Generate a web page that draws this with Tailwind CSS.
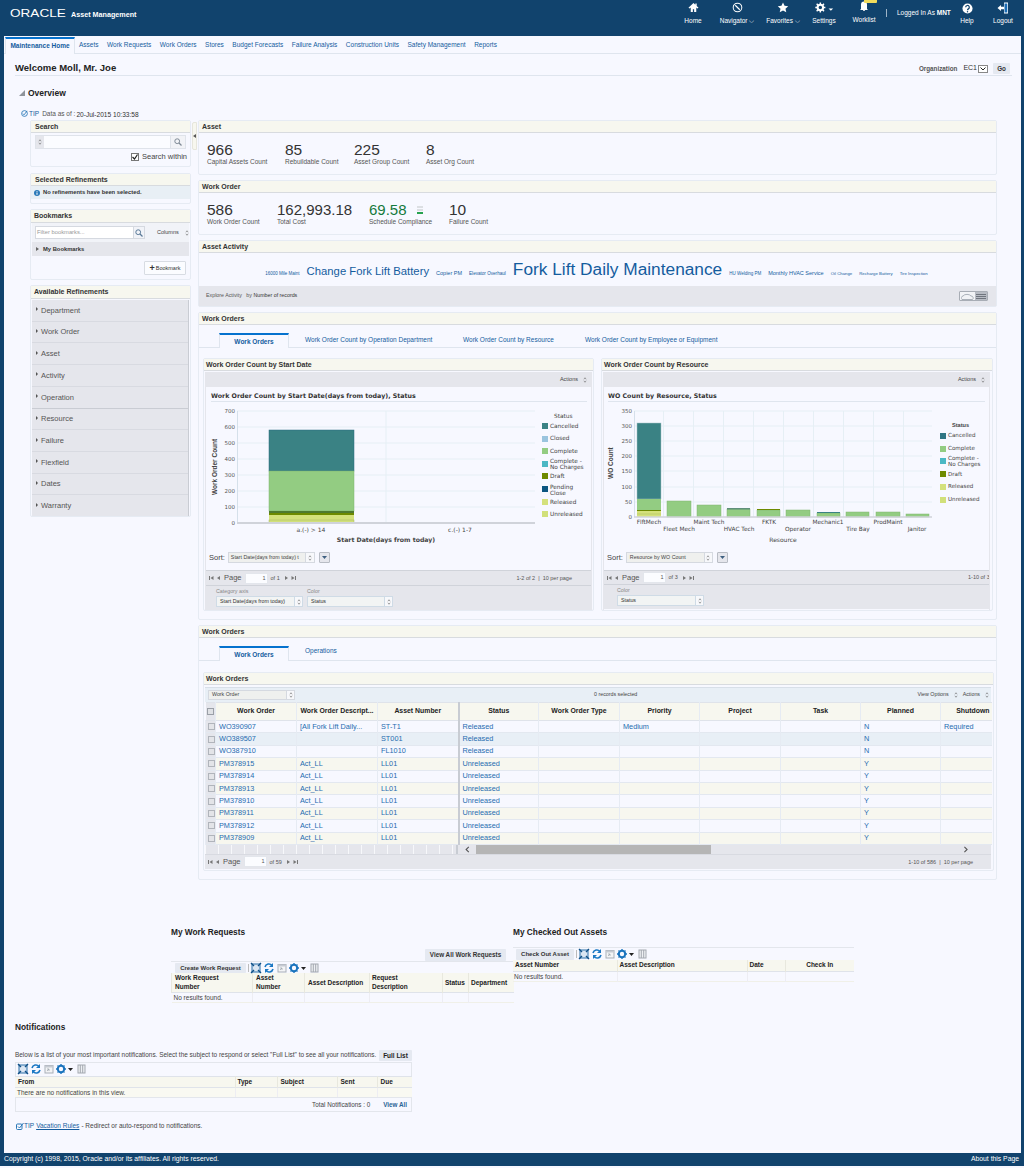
<!DOCTYPE html>
<html lang="en">
<head>
<meta charset="utf-8">
<title>Asset Management</title>
<script src="https://cdn.jsdelivr.net/npm/@tailwindcss/browser@4"></script>
</head>
<body class="m-0 bg-[#11436d] [font-family:'Liberation_Sans',Arial,sans-serif]">
<svg class="hidden" width="0" height="0">
  <symbol id="tools" viewBox="0 0 70 12">
    <rect x="2" y="2" width="8" height="8" fill="#dbe6f2" stroke="#2a6fa8"/><path d="M1 1l3 3M11 1L8 4M1 11l3-3M11 11L8 8" stroke="#0f4f86" stroke-width="1.4"/>
    <path d="M15 5a4 4 0 0 1 7-1.5M23 7a4 4 0 0 1-7 1.5" fill="none" stroke="#1b78c4" stroke-width="1.6"/><path d="M23 1v4h-4zM15 11V7h4z" fill="#1b78c4"/>
    <rect x="28" y="2.5" width="8" height="7.5" fill="#f3f4f6" stroke="#a9afb8"/><rect x="28" y="2.5" width="8" height="2" fill="#c5cad2"/><path d="M30 8l2-2M30 6h2v2" stroke="#9aa1ab" fill="none" stroke-width=".7"/>
    <circle cx="44" cy="6" r="3.2" fill="none" stroke="#1a73bd" stroke-width="2"/><path d="M44 1v2M44 9v2M39 6h2M47 6h2M40.5 2.500l1.400 1.400M46.100 8.100l1.400 1.400M40.500 9.500l1.400-1.400M46.100 3.900l1.400-1.400" stroke="#1a73bd" stroke-width="1.300"/>
    <path d="M51 5h5l-2.500 3z" fill="#222"/>
    <rect x="61" y="2" width="7" height="8" fill="#eef0f3" stroke="#a3a8b0"/><path d="M63.300 2v8M65.700 2v8" stroke="#a3a8b0"/>
  </symbol>
  <symbol id="updown" viewBox="0 0 5 8"><path d="M1 3l1.500-2L4 3M1 5l1.500 2L4 5" fill="none" stroke="#666" stroke-width=".8"/></symbol>
  <symbol id="pgl" viewBox="0 0 12 6"><path d="M.5 1v4" stroke="#777"/><path d="M4.500 1v4L1.500 3zM11 1v4L8 3z" fill="#777"/></symbol>
  <symbol id="pgr" viewBox="0 0 12 6"><path d="M1 1v4l3-2zM7.500 1v4l3-2z" fill="#777"/><path d="M11.500 1v4" stroke="#777"/></symbol>
</svg>

<header class="h-[36px] flex text-white text-[6.5px] relative">
  <div class="flex items-baseline pl-[10px] pt-[6px] h-[20px] w-[672px]">
    <span class="inline-block w-[61px] text-[11.5px] leading-[14px] scale-x-[1.18] origin-left">ORACLE</span>
    <span class="font-bold text-[7.2px]">Asset Management</span>
  </div>
  <div class="w-[42px] flex flex-col items-center pt-[2px]">
    <svg width="11" height="11" viewBox="0 0 12 12"><path d="M6 1L.5 6.200 2 7l1-.9V11h2.300V8h1.400v3H9V6.100l1 .9 1.500-.8L9.500 4.300V1.500H8V2.900z" fill="#fff"/></svg>
    <span class="mt-[4px] leading-[8px]">Home</span>
  </div>
  <div class="w-[46px] flex flex-col items-center pt-[2px]">
    <svg width="11" height="11" viewBox="0 0 12 12"><circle cx="6" cy="6" r="4.700" fill="none" stroke="#fff" stroke-width="1.100"/><path d="M3.500 3.500L8.500 8.500" stroke="#fff" stroke-width="1.300"/></svg>
    <span class="mt-[4px] leading-[8px]">Navigator ⌵</span>
  </div>
  <div class="w-[46px] flex flex-col items-center pt-[2px]">
    <svg width="12" height="11" viewBox="0 0 12 12"><path d="M6 .5l1.700 3.700 4 .4-3 2.700.9 4L6 9.300 2.400 11.300l.9-4-3-2.700 4-.4z" fill="#fff"/></svg>
    <span class="mt-[4px] leading-[8px]">Favorites ⌵</span>
  </div>
  <div class="w-[36px] flex flex-col items-center pt-[2px]">
    <svg width="22" height="11" viewBox="0 0 22 12"><circle cx="7" cy="6" r="3" fill="none" stroke="#fff" stroke-width="2.200"/><path d="M7 .5v2M7 9.500v2M1.500 6h2M10.500 6h2M3 2l1.500 1.500M9.500 8.500L11 10M3 10l1.500-1.500M9.500 3.500L11 2" stroke="#fff" stroke-width="1.600"/><path d="M16 7h5l-2.500 2.500z" fill="#fff"/></svg>
    <span class="mt-[4px] leading-[8px]">Settings</span>
  </div>
  <div class="w-[44px] flex flex-col items-center pt-[2px] relative">
    <svg width="10" height="10" viewBox="0 0 10 10" class="-mt-[1px] mb-[1px]"><path d="M2 8V3.500a3 3 0 0 1 6 0V8l1 1H1zM4 9.200h2V10H4z" fill="#fff"/></svg>
    <span class="mt-[4px] leading-[8px]">Worklist</span>
    <span class="absolute left-[22px] top-0 w-[13px] h-[3px] bg-[#f2dc5c] rounded-b-[1px]"></span>
  </div>
  <div class="w-[65px] flex items-start">
    <span class="w-px h-[8px] bg-[#9fb5c8] mt-[9px]"></span>
    <span class="ml-[10px] mt-[9px] leading-[8px] whitespace-nowrap">Logged In As <b>MNT</b></span>
  </div>
  <div class="w-[32px] flex flex-col items-center pt-[3px]">
    <svg width="11" height="11" viewBox="0 0 12 12"><circle cx="6" cy="6" r="5.500" fill="#fff"/><path d="M4 4.700a2 2 0 1 1 3 1.700c-.7.400-1 .7-1 1.500" fill="none" stroke="#11436d" stroke-width="1.300"/><circle cx="6" cy="9.500" r=".8" fill="#11436d"/></svg>
    <span class="mt-[3px] leading-[8px]">Help</span>
  </div>
  <div class="w-[40px] flex flex-col items-center pt-[2px]">
    <svg width="12" height="12" viewBox="0 0 12 12"><path d="M7 .5h4v11H7z" fill="#fff"/><path d="M7.500 1.500h2.800v9H7.500z" fill="#1a6cb5"/><path d="M.5 6L4 3v1.800h3v2.400H4V9z" fill="#fff"/></svg>
    <span class="mt-[3px] leading-[8px]">Logout</span>
  </div>
</header>

<div class="ml-[4px] mr-[3px] h-[1117px] bg-[#f7f8ff] text-[#333] overflow-hidden">
  <nav class="h-[18px] border-b border-[#dfe5ee] flex items-start pl-[1px] text-[6.500px] text-[#145c9e]">
    <span class="w-[70px] h-[17px] border-t-2 border-t-[#0572ce] border-x border-x-[#dfe5ee] bg-[#f7f8ff] text-center font-bold leading-[14px] mt-[1px] -mb-px">Maintenance Home</span>
    <div class="flex gap-[8.500px] pl-[4px] pt-[5px] leading-[8px] whitespace-nowrap">
      <span>Assets</span><span>Work Requests</span><span>Work Orders</span><span>Stores</span><span>Budget Forecasts</span><span>Failure Analysis</span><span>Construction Units</span><span>Safety Management</span><span>Reports</span>
    </div>
  </nav>

  <div class="ml-[11px] mr-[9px] h-[22px] border-b border-[#dfe5ee] flex items-center justify-between pt-[8px]">
    <h1 class="text-[9.500px] font-bold text-[#222]">Welcome Moll, Mr. Joe</h1>
    <div class="flex items-center text-[6.300px] mr-[2px]">
      <span class="font-bold text-[#555]">Organization</span>
      <span class="ml-[6px] text-[7px]">EC1</span>
      <span class="ml-px w-[10px] h-[8px] border border-[#888] bg-white flex items-center justify-center"><svg width="6" height="4" viewBox="0 0 6 4"><path d="M.5.500L3 3 5.500.500" fill="none" stroke="#222" stroke-width="1"/></svg></span>
      <span class="ml-[5px] w-[17px] h-[11px] rounded-[1px] bg-[#e5e9f1] font-bold text-center leading-[11px]">Go</span>
    </div>
  </div>

  <div class="flex items-center ml-[15px] mt-[10px] h-[14px]">
    <svg width="6" height="6" viewBox="0 0 6 6"><path d="M6 0v6H0z" fill="#8f949b"/></svg>
    <h2 class="ml-[3px] text-[8.500px] font-bold text-[#222]">Overview</h2>
  </div>

  <div class="flex items-center ml-[17px] mt-[9px] h-[9px] text-[6.500px] leading-[9px]">
    <svg width="7" height="7" viewBox="0 0 8 8"><circle cx="4" cy="4" r="3.300" fill="none" stroke="#2a79b8"/><path d="M2 4l1.500 1.500L7 1" fill="none" stroke="#2a79b8"/></svg>
    <span class="ml-px text-[#145c9e]">TIP</span>
    <span class="ml-[3px] text-[#555]">Data as of :</span>
    <span class="ml-[1px] mt-[1px] text-[#333] text-[6.600px]">20-Jul-2015 10:33:58</span>
  </div>

  <main class="flex ml-[26px] mt-[2px] relative">
    <aside class="w-[161px] flex flex-col">
      <section class="h-[47px] border border-[#e6ebf3] rounded-[2px]">
        <div class="h-[12px] bg-[#f7f7ef] border-b border-[#d8dbdf] pl-[4px] text-[7px] font-bold leading-[11px]">Search</div>
        <div class="flex mx-[4px] mt-[2px] h-[14px] border border-[#dfe3ea]">
          <span class="w-[8px] bg-[#e5e6ec] flex items-center justify-center"><svg width="4" height="6"><use href="#updown"/></svg></span>
          <span class="flex-1 bg-[#fbfcff] border-r border-[#dfe3ea]"></span>
          <span class="w-[14px] bg-[#f2f3f7] flex items-center justify-center"><svg width="8" height="8" viewBox="0 0 8 8"><circle cx="3.200" cy="3.200" r="2.400" fill="none" stroke="#7f8a96"/><path d="M5 5l2.500 2.500" stroke="#7f8a96" stroke-width="1.200"/></svg></span>
        </div>
        <div class="flex justify-end items-center pr-[3px] mt-[3px] text-[7.500px] text-[#444] leading-[10px]">
          <span class="w-[8px] h-[8px] border border-[#777] bg-white mr-[3px] flex items-center justify-center"><svg width="6" height="6" viewBox="0 0 6 6"><path d="M.5 3l2 2L5.500 .5" fill="none" stroke="#222" stroke-width="1.200"/></svg></span>Search within
        </div>
      </section>
      <section class="mt-[6px] h-[31px] border border-[#e6ebf3] rounded-[2px]">
        <div class="h-[12px] bg-[#f7f7ef] border-b border-[#d8dbdf] pl-[4px] text-[7px] font-bold leading-[11px]">Selected Refinements</div>
        <div class="h-[13px] bg-[#e8eff5] flex items-center pl-[3px] text-[5.800px] font-bold text-[#333]">
          <svg width="6" height="6" viewBox="0 0 6 6"><circle cx="3" cy="3" r="3" fill="#2a79b8"/><path d="M3 2.500v2.300M3 1v.8" stroke="#fff"/></svg>
          <span class="ml-[3px]">No refinements have been selected.</span>
        </div>
      </section>
      <section class="mt-[5px] h-[71px] border border-[#e6ebf3] rounded-[2px]">
        <div class="h-[13px] bg-[#f7f7ef] border-b border-[#d8dbdf] pl-[3px] text-[7px] font-bold leading-[12px]">Bookmarks</div>
        <div class="ml-[1px] mr-[1px] h-[19px] flex items-center bg-[#f1f3f8] pl-[3px]">
          <span class="w-[99px] h-[13px] border border-[#d5d9e0] bg-white text-[5.800px] text-[#999] leading-[11px] pl-[1px]">Filter bookmarks...</span>
          <span class="w-[11px] h-[13px] border border-l-0 border-[#d5d9e0] flex items-center justify-center"><svg width="8" height="8" viewBox="0 0 8 8"><circle cx="3.200" cy="3.200" r="2.400" fill="none" stroke="#5a7a98"/><path d="M5 5l2.500 2.500" stroke="#5a7a98" stroke-width="1.200"/></svg></span>
          <span class="ml-[12px] text-[5.500px] text-[#444]">Columns</span>
          <svg width="4" height="6" class="ml-[6px]"><use href="#updown"/></svg>
        </div>
        <div class="mx-[1px] h-[14px] bg-[#e5e6ec] flex items-center pl-[4px] text-[5.800px] font-bold text-[#333]">
          <svg width="3" height="4" viewBox="0 0 3 4"><path d="M0 0l3 2-3 2z" fill="#666"/></svg>
          <span class="ml-[4px]">My Bookmarks</span>
        </div>
        <div class="flex justify-end mr-[4px] mt-[5px]">
          <span class="h-[14px] w-[42px] border border-[#d8dce3] rounded-[1px] bg-[#fbfcff] text-[5.500px] flex items-center justify-center"><b class="text-[9px] leading-[9px] mr-[1px]">+</b>Bookmark</span>
        </div>
      </section>
      <section class="mt-[5px] h-[232px] border border-[#e6ebf3] rounded-[2px]">
        <div class="h-[13px] bg-[#f7f7ef] border-b border-[#d8dbdf] pl-[3px] text-[7px] font-bold leading-[12px]">Available Refinements</div>
        <ul class="mx-[1px] mt-px h-[216px] bg-[#e5e6ec] border-r border-[#c9ccd3] flex flex-col text-[7.500px] text-[#555]">
          <li class="flex-1 flex items-center pl-[4px] border-b border-[#d8dae1]"><svg width="2" height="4" viewBox="0 0 2 4" class="-mt-[2px]"><path d="M0 0l2 2-2 2z" fill="#555"/></svg><span class="ml-[3px]">Department</span></li>
          <li class="flex-1 flex items-center pl-[4px] border-b border-[#d8dae1]"><svg width="2" height="4" viewBox="0 0 2 4" class="-mt-[2px]"><path d="M0 0l2 2-2 2z" fill="#555"/></svg><span class="ml-[3px]">Work Order</span></li>
          <li class="flex-1 flex items-center pl-[4px] border-b border-[#d8dae1]"><svg width="2" height="4" viewBox="0 0 2 4" class="-mt-[2px]"><path d="M0 0l2 2-2 2z" fill="#555"/></svg><span class="ml-[3px]">Asset</span></li>
          <li class="flex-1 flex items-center pl-[4px] border-b border-[#d8dae1]"><svg width="2" height="4" viewBox="0 0 2 4" class="-mt-[2px]"><path d="M0 0l2 2-2 2z" fill="#555"/></svg><span class="ml-[3px]">Activity</span></li>
          <li class="flex-1 flex items-center pl-[4px] border-b border-[#c9ccd3]"><svg width="2" height="4" viewBox="0 0 2 4" class="-mt-[2px]"><path d="M0 0l2 2-2 2z" fill="#555"/></svg><span class="ml-[3px]">Operation</span></li>
          <li class="flex-1 flex items-center pl-[4px] border-b border-[#d8dae1]"><svg width="2" height="4" viewBox="0 0 2 4" class="-mt-[2px]"><path d="M0 0l2 2-2 2z" fill="#555"/></svg><span class="ml-[3px]">Resource</span></li>
          <li class="flex-1 flex items-center pl-[4px] border-b border-[#d8dae1]"><svg width="2" height="4" viewBox="0 0 2 4" class="-mt-[2px]"><path d="M0 0l2 2-2 2z" fill="#555"/></svg><span class="ml-[3px]">Failure</span></li>
          <li class="flex-1 flex items-center pl-[4px] border-b border-[#d8dae1]"><svg width="2" height="4" viewBox="0 0 2 4" class="-mt-[2px]"><path d="M0 0l2 2-2 2z" fill="#555"/></svg><span class="ml-[3px]">Flexfield</span></li>
          <li class="flex-1 flex items-center pl-[4px] border-b border-[#d8dae1]"><svg width="2" height="4" viewBox="0 0 2 4" class="-mt-[2px]"><path d="M0 0l2 2-2 2z" fill="#555"/></svg><span class="ml-[3px]">Dates</span></li>
          <li class="flex-1 flex items-center pl-[4px]"><svg width="2" height="4" viewBox="0 0 2 4" class="-mt-[2px]"><path d="M0 0l2 2-2 2z" fill="#555"/></svg><span class="ml-[3px]">Warranty</span></li>
        </ul>
      </section>
    </aside>

    <span class="absolute left-[162px] top-[2px] w-[5px] h-[28px] bg-[#f7f7ef] border border-[#e6e6dc] rounded-l-[2px] flex items-center"><svg width="3" height="4" viewBox="0 0 3 4"><path d="M3 0v4L0 2z" fill="#555"/></svg></span>

    <div class="ml-[7px] w-[799px] flex flex-col">
      <section class="h-[55px] border border-[#e6ebf3] rounded-[2px]">
        <div class="h-[12px] bg-[#f7f7ef] border-b border-[#d8dbdf] pl-[3px] text-[7px] font-bold leading-[11px]">Asset</div>
        <div class="flex pl-[8px] pt-[9px]">
          <div class="w-[78px]"><div class="text-[15.500px] leading-[16px] text-[#333]">966</div><div class="text-[6.500px] leading-[8px] text-[#555]">Capital Assets Count</div></div>
          <div class="w-[69px]"><div class="text-[15.500px] leading-[16px] text-[#333]">85</div><div class="text-[6.500px] leading-[8px] text-[#555]">Rebuildable Count</div></div>
          <div class="w-[72px]"><div class="text-[15.500px] leading-[16px] text-[#333]">225</div><div class="text-[6.500px] leading-[8px] text-[#555]">Asset Group Count</div></div>
          <div><div class="text-[15.500px] leading-[16px] text-[#333]">8</div><div class="text-[6.500px] leading-[8px] text-[#555]">Asset Org Count</div></div>
        </div>
      </section>
      <section class="mt-[5px] h-[55px] border border-[#e6ebf3] rounded-[2px]">
        <div class="h-[12px] bg-[#f7f7ef] border-b border-[#d8dbdf] pl-[3px] text-[7px] font-bold leading-[11px]">Work Order</div>
        <div class="flex pl-[8px] pt-[9px]">
          <div class="w-[70px]"><div class="text-[15.500px] leading-[16px] text-[#333]">586</div><div class="text-[6.500px] leading-[8px] text-[#555]">Work Order Count</div></div>
          <div class="w-[92px]"><div class="text-[15px] leading-[16px] text-[#333]">162,993.18</div><div class="text-[6.500px] leading-[8px] text-[#555]">Total Cost</div></div>
          <div class="w-[80px]">
            <div class="flex items-center text-[15px] leading-[16px] text-[#157a3d]">69.58<span class="ml-[10px] w-[6px] h-[8px] flex flex-col"><span class="h-[2px] bg-[#dcdfe3]"></span><span class="h-[1px]"></span><span class="h-[2px] bg-[#dcdfe3]"></span><span class="h-[1px]"></span><span class="h-[2px] bg-[#27a24f]"></span></span></div>
            <div class="text-[6.500px] leading-[8px] text-[#555] whitespace-nowrap">Schedule Compliance</div>
          </div>
          <div><div class="text-[15.500px] leading-[16px] text-[#333]">10</div><div class="text-[6.500px] leading-[8px] text-[#555]">Failure Count</div></div>
        </div>
      </section>
      <section class="mt-[5px] h-[67px] border border-[#e6ebf3] rounded-[2px] flex flex-col">
        <div class="h-[12px] bg-[#f7f7ef] border-b border-[#d8dbdf] pl-[3px] text-[7px] font-bold leading-[11px]">Asset Activity</div>
        <div class="flex-1 flex items-baseline justify-center gap-[7px] pt-[5px] pr-[2px] text-[#145c9e] whitespace-nowrap">
          <span class="text-[4.500px]">16000 Mile Maint</span>
          <span class="text-[11.300px]">Change Fork Lift Battery</span>
          <span class="text-[5.500px]">Copier PM</span>
          <span class="text-[4.600px]">Elevator Overhaul</span>
          <span class="text-[17.300px] leading-[22px]">Fork Lift Daily Maintenance</span>
          <span class="text-[4.500px]">HU Welding PM</span>
          <span class="text-[5.500px]">Monthly HVAC Service</span>
          <span class="text-[4.300px]">Oil Change</span>
          <span class="text-[4.300px]">Recharge Battery</span>
          <span class="text-[4.300px]">Tire Inspection</span>
        </div>
        <div class="h-[20px] bg-[#e5e6ec] flex items-center justify-between pl-[7px] pr-[8px] text-[5.300px] text-[#555]">
          <span>Explore Activity &nbsp; by <span class="text-[#333]">Number of records</span></span>
          <span class="w-[29px] h-[10px] border border-[#a8adb5] rounded-[1px] flex overflow-hidden bg-[#f2f3f6]">
            <span class="w-[15px] flex items-center justify-center"><svg width="13" height="7" viewBox="0 0 13 7"><path d="M1 6.500a2 2 0 0 1 1-3.500 4.500 3 0 0 1 8 0 2 2 0 0 1 1.500 3.500z" fill="none" stroke="#98a0aa" stroke-width=".8"/></svg></span>
            <span class="flex-1 bg-[#b8bcc4] flex flex-col justify-center gap-[1px] px-[1px]"><span class="h-px bg-[#70757e]"></span><span class="h-px bg-[#70757e]"></span><span class="h-px bg-[#70757e]"></span></span>
          </span>
        </div>
      </section>

      <section class="mt-[5px] h-[308px] border border-[#e6ebf3] rounded-[2px]">
        <div class="h-[12px] bg-[#f7f7ef] border-b border-[#d8dbdf] pl-[3px] text-[7px] font-bold leading-[11px]">Work Orders</div>
        <div class="h-[23px] border-b border-[#dfe5ee] flex items-end pl-[20px] text-[6.500px] text-[#145c9e] whitespace-nowrap">
          <span class="w-[70px] h-[15px] border-t-2 border-t-[#0572ce] border-x border-x-[#dfe5ee] -mb-px bg-[#f7f8ff] text-center font-bold leading-[14px]">Work Orders</span>
          <div class="flex items-center h-[15px] ml-[16px]"><span class="w-[158px]">Work Order Count by Operation Department</span><span class="w-[122px]">Work Order Count by Resource</span><span>Work Order Count by Employee or Equipment</span></div>
        </div>
        <div class="flex gap-[7px] px-[4px] mt-[10px]">
          <div class="w-[391px] h-[253px] border border-[#e6ebf3] rounded-[2px] flex flex-col">
            <div class="h-[12px] bg-[#f7f7ef] border-b border-[#d8dbdf] pl-[2px] text-[7px] font-bold leading-[11px]">Work Order Count by Start Date</div>
            <div class="mx-[1px] mt-px border-x border-[#e5e6ec] flex-1 flex flex-col">
              <div class="h-[15px] bg-[#e5e6ec] flex items-center justify-end pr-[4px] text-[5.500px] text-[#444]">Actions<svg width="4" height="6" class="ml-[5px]"><use href="#updown"/></svg></div>
              <svg width="387" height="162" viewBox="205 387 387 162" class="block" font-family="'DejaVu Sans',sans-serif">
                <text x="210" y="398" font-size="6.300" font-weight="700" fill="#333">Work Order Count by Start Date(days from today), Status</text>
                <path d="M210 401.500H586" stroke="#dfe5ee"/>
                <g stroke="#e6eff5"><path d="M236 411H534M236 427H534M236 443H534M236 459H534M236 475H534M236 491H534M236 507H534M385 411V523"/></g>
                <path d="M236.500 411V523" stroke="#d5e0ea"/>
                <g font-size="5.500" fill="#555" text-anchor="end"><text x="234" y="413">700</text><text x="234" y="429">600</text><text x="234" y="445">500</text><text x="234" y="461">400</text><text x="234" y="477">300</text><text x="234" y="493">200</text><text x="234" y="509">100</text><text x="234" y="525">0</text></g>
                <text transform="translate(216 495) rotate(-90)" font-size="6.500" font-weight="700" fill="#444" font-family="'Liberation Sans',sans-serif">Work Order Count</text>
                <rect x="268" y="430" width="85" height="41" fill="#3a8284" stroke="#2b6a80" stroke-width=".5"/>
                <rect x="268" y="471" width="85" height="40" fill="#93cc82" stroke="#7fb56f" stroke-width=".5"/>
                <rect x="268" y="511" width="85" height="2" fill="#4f7a30"/>
                <rect x="268" y="513" width="85" height="2" fill="#6d8a00"/>
                <rect x="268" y="515" width="85" height="5" fill="#d4e17c"/>
                <rect x="268" y="520" width="85" height="3" fill="#d1e07a" stroke="#a9b85f" stroke-width=".5"/>
                <path d="M236 523H534" stroke="#d0d3da" stroke-width="2"/>
                <g font-size="6" fill="#444" text-anchor="middle"><text x="310" y="532">a.(-) &gt; 14</text><text x="459" y="532">c.(-) 1-7</text></g>
                <text x="385" y="542" font-size="6.200" font-weight="700" fill="#444" text-anchor="middle">Start Date(days from today)</text>
                <g font-size="5.800" fill="#444"><text x="553" y="418">Status</text>
                  <rect x="541" y="423" width="6" height="6" fill="#3a8284"/><text x="549" y="428">Cancelled</text>
                  <rect x="541" y="436" width="6" height="6" fill="#9ac4de"/><text x="549" y="440">Closed</text>
                  <rect x="541" y="448" width="6" height="6" fill="#93cc82"/><text x="549" y="453">Complete</text>
                  <rect x="541" y="461" width="6" height="6" fill="#4bb8c4"/><text x="549" y="463">Complete -</text><text x="549" y="469">No Charges</text>
                  <rect x="541" y="473" width="6" height="6" fill="#6d8a00"/><text x="549" y="478">Draft</text>
                  <rect x="541" y="486" width="6" height="6" fill="#0b5680"/><text x="549" y="489">Pending</text><text x="549" y="495">Close</text>
                  <rect x="541" y="499" width="6" height="6" fill="#d4e17c"/><text x="549" y="504">Released</text>
                  <rect x="541" y="511" width="6" height="6" fill="#d1e07a"/><text x="549" y="516">Unreleased</text>
                </g>
              </svg>
              <div class="h-[21px] pb-[4px] flex items-center pl-[3px] text-[7.500px] text-[#444]">Sort:
                <span class="ml-[3px] w-[87px] h-[11px] border border-[#d5d9e0] bg-[#eff0ee] flex items-center justify-between text-[5.300px] pl-[2px] whitespace-nowrap overflow-hidden">Start Date(days from today) t<span class="w-[9px] h-full border-l border-[#d5d9e0] bg-[#f7f8fb] flex items-center justify-center shrink-0"><svg width="4" height="6"><use href="#updown"/></svg></span></span>
                <span class="ml-[4px] w-[11px] h-[11px] border border-[#b8bcc4] bg-[#e5e6ec] rounded-[1px] flex items-center justify-center"><svg width="5" height="3" viewBox="0 0 5 3"><path d="M0 0h5L2.500 3z" fill="#3e5f80"/></svg></span>
              </div>
              <div class="h-[15px] bg-[#e5e6ec] border-t border-[#d0d3da] flex items-center px-[3px] text-[#555] text-[5.500px]">
                <svg width="12" height="6"><use href="#pgl"/></svg><span class="ml-[3px] text-[7.500px]">Page</span>
                <span class="ml-[3px] w-[23px] h-[11px] bg-[#fbfcff] border border-[#e3e6ec] text-right pr-[1px] leading-[9px]">1</span>
                <span class="ml-[3px]">of 1</span><svg width="12" height="6" class="ml-[4px]"><use href="#pgr"/></svg>
                <span class="ml-auto mr-[16px]">1-2 of 2 &nbsp;|&nbsp; 10 per page</span>
              </div>
              <div class="h-[25px] bg-[#e5e6ec] border-t border-[#d0d3da] flex gap-[4px] pl-[10px] text-[5.300px]">
                <div class="mt-[2px]"><div class="text-[#888] leading-[6px]">Category axis</div><div class="w-[87px] h-[11px] mt-[2px] border border-[#cfdbe6] bg-[#f2f4f4] flex items-center justify-between pl-[3px] text-[#333]">Start Date(days from today)<span class="w-[8px] h-full border-l border-[#cfdbe6] bg-[#f7f8fb] flex items-center justify-center"><svg width="4" height="6"><use href="#updown"/></svg></span></div></div>
                <div class="mt-[2px]"><div class="text-[#888] leading-[6px]">Color</div><div class="w-[86px] h-[11px] mt-[2px] border border-[#cfdbe6] bg-[#f2f4f4] flex items-center justify-between pl-[3px] text-[#333]">Status<span class="w-[8px] h-full border-l border-[#cfdbe6] bg-[#f7f8fb] flex items-center justify-center"><svg width="4" height="6"><use href="#updown"/></svg></span></div></div>
              </div>
            </div>
          </div>

          <div class="w-[392px] h-[253px] border border-[#e6ebf3] rounded-[2px] flex flex-col">
            <div class="h-[12px] bg-[#f7f7ef] border-b border-[#d8dbdf] pl-[2px] text-[7px] font-bold leading-[11px]">Work Order Count by Resource</div>
            <div class="ml-px mr-[2px] mt-px border-x border-[#e5e6ec] flex-1 flex flex-col overflow-hidden">
              <div class="h-[15px] bg-[#e5e6ec] flex items-center justify-end pr-[4px] text-[5.500px] text-[#444]">Actions<svg width="4" height="6" class="ml-[5px]"><use href="#updown"/></svg></div>
              <svg width="387" height="162" viewBox="603 387 387 162" class="block" font-family="'DejaVu Sans',sans-serif">
                <text x="607" y="398" font-size="6.300" font-weight="700" fill="#333">WO Count by Resource, Status</text>
                <path d="M607 401.500H984" stroke="#dfe5ee"/>
                <g stroke="#e6eff5"><path d="M633 411H931M633 426H931M633 441H931M633 456H931M633 471H931M633 487H931M633 502H931"/><path d="M662.500 411V517M692.500 411V517M722.500 411V517M752.500 411V517M782.500 411V517M812.500 411V517M842.500 411V517M872.500 411V517M902.500 411V517"/></g>
                <path d="M633.500 411V517" stroke="#d5e0ea"/>
                <g font-size="5.500" fill="#555" text-anchor="end"><text x="631" y="413">350</text><text x="631" y="428">300</text><text x="631" y="443">250</text><text x="631" y="458">200</text><text x="631" y="473">150</text><text x="631" y="489">100</text><text x="631" y="504">50</text><text x="631" y="519">0</text></g>
                <text transform="translate(612 479) rotate(-90)" font-size="6.500" fill="#444" font-family="'Liberation Sans',sans-serif" font-weight="700">WO Count</text>
                <rect x="636" y="423" width="24" height="76" fill="#3a8284" stroke="#a8c2c6" stroke-width=".5"/>
                <rect x="636" y="499" width="24" height="11" fill="#93cc82"/>
                <rect x="636" y="510" width="24" height="1" fill="#6d8a00"/>
                <rect x="636" y="511" width="24" height="6" fill="#d4e17c"/><path d="M636 514H660" stroke="#a9b85f" stroke-width=".5"/>
                <g fill="#93cc82" stroke="#7fb56f" stroke-width=".5">
                  <rect x="666" y="501" width="24" height="16"/><rect x="696" y="505" width="24" height="12"/><rect x="726" y="509" width="23" height="8"/><rect x="756" y="510" width="23" height="7"/><rect x="785" y="510" width="24" height="7"/><rect x="816" y="513" width="23" height="4"/><rect x="845" y="512" width="23" height="5"/><rect x="875" y="512" width="24" height="5"/><rect x="905" y="514" width="23" height="3"/>
                </g>
                <rect x="726" y="508" width="23" height="1.500" fill="#5f8f7a"/><rect x="756" y="509" width="23" height="1" fill="#6d8a00"/><rect x="816" y="512" width="23" height="1" fill="#3a8284"/>
                <path d="M633 517H931" stroke="#d0d3da" stroke-width="1.500"/>
                <g font-size="5.800" fill="#444" text-anchor="middle"><text x="648" y="524">FlftMech</text><text x="678" y="531">Fleet Mech</text><text x="708" y="524">Maint Tech</text><text x="738" y="531">HVAC Tech</text><text x="768" y="524">FKTK</text><text x="797" y="531">Operator</text><text x="827" y="524">Mechanic1</text><text x="857" y="531">Tire Bay</text><text x="887" y="524">ProdMaint</text><text x="916" y="531">Janitor</text></g>
                <text x="782" y="542" font-size="6" fill="#444" text-anchor="middle">Resource</text>
                <g font-size="5.600" fill="#444"><text x="951" y="427" font-weight="700" font-family="'Liberation Sans',sans-serif">Status</text>
                  <rect x="939" y="433" width="6" height="6" fill="#2f7583"/><text x="947" y="437">Cancelled</text>
                  <rect x="939" y="446" width="6" height="6" fill="#93cc82"/><text x="947" y="450">Complete</text>
                  <rect x="939" y="458" width="6" height="6" fill="#4bb8c4"/><text x="947" y="460">Complete -</text><text x="947" y="466">No Charges</text>
                  <rect x="939" y="471" width="6" height="6" fill="#6d8a00"/><text x="947" y="476">Draft</text>
                  <rect x="939" y="484" width="6" height="6" fill="#d4e17c"/><text x="947" y="488">Released</text>
                  <rect x="939" y="497" width="6" height="6" fill="#d1e07a"/><text x="947" y="501">Unreleased</text>
                </g>
              </svg>
              <div class="h-[21px] pb-[4px] flex items-center pl-[3px] text-[7.500px] text-[#444]">Sort:
                <span class="ml-[3px] w-[87px] h-[11px] border border-[#d5d9e0] bg-[#eff0ee] flex items-center justify-between text-[5.300px] pl-[3px] whitespace-nowrap overflow-hidden">Resource by WO Count<span class="w-[8px] h-full border-l border-[#d5d9e0] bg-[#f7f8fb] flex items-center justify-center shrink-0"><svg width="4" height="6"><use href="#updown"/></svg></span></span>
                <span class="ml-[4px] w-[11px] h-[11px] border border-[#b8bcc4] bg-[#e5e6ec] rounded-[1px] flex items-center justify-center"><svg width="5" height="3" viewBox="0 0 5 3"><path d="M0 0h5L2.500 3z" fill="#3e5f80"/></svg></span>
              </div>
              <div class="h-[14px] bg-[#e5e6ec] border-t border-[#d0d3da] flex items-center px-[3px] text-[#555] text-[5.500px]">
                <svg width="12" height="6"><use href="#pgl"/></svg><span class="ml-[3px] text-[7.500px]">Page</span>
                <span class="ml-[3px] w-[23px] h-[11px] bg-[#fbfcff] border border-[#e3e6ec] text-right pr-[1px] leading-[9px]">1</span>
                <span class="ml-[3px]">of 3</span><svg width="12" height="6" class="ml-[4px]"><use href="#pgr"/></svg>
                <span class="ml-auto -mr-[4px] whitespace-nowrap w-[22px] overflow-hidden">1-10 of 30</span>
              </div>
              <div class="h-[25px] bg-[#e5e6ec] border-t border-[#d0d3da] pl-[13px] text-[5.300px]">
                <div class="mt-[2px]"><div class="text-[#888] leading-[6px]">Color</div><div class="w-[87px] h-[11px] mt-[2px] border border-[#cfdbe6] bg-[#f2f4f4] flex items-center justify-between pl-[3px] text-[#333]">Status<span class="w-[8px] h-full border-l border-[#cfdbe6] bg-[#f7f8fb] flex items-center justify-center"><svg width="4" height="6"><use href="#updown"/></svg></span></div></div>
              </div>
            </div>
          </div>
        </div>
      </section>

      <section class="mt-[5px] h-[255px] border border-[#e6ebf3] rounded-[2px]">
        <div class="h-[12px] bg-[#f7f7ef] border-b border-[#d8dbdf] pl-[3px] text-[7px] font-bold leading-[11px]">Work Orders</div>
        <div class="h-[23px] border-b border-[#dfe5ee] flex items-end pl-[20px] text-[6.500px] text-[#145c9e]">
          <span class="w-[70px] h-[15px] border-t-2 border-t-[#0572ce] border-x border-x-[#dfe5ee] -mb-px bg-[#f7f8ff] text-center font-bold leading-[14px]">Work Orders</span>
          <span class="ml-[16px] h-[15px] leading-[12px]">Operations</span>
        </div>
        <div class="mx-[4px] mt-[11px] h-[199px] border border-[#e6ebf3] rounded-[2px] w-[791px]">
          <div class="h-[12px] bg-[#f7f7ef] border-b border-[#d8dbdf] pl-[2px] text-[7px] font-bold leading-[11px]">Work Orders</div>
          <div class="ml-px w-[786px] mt-[2px]">
            <div class="h-[15px] bg-[#e8eff6] border-t border-[#d8dfe8] flex items-center pl-[3px] pr-[2px] text-[5.300px] text-[#444]">
              <span class="w-[87px] h-[10px] bg-[#eff0ee] border border-[#d5d9e0] flex items-center justify-between pl-[3px]">Work Order<span class="w-[8px] h-full border-l border-[#d5d9e0] bg-[#f7f8fb] flex items-center justify-center"><svg width="4" height="6"><use href="#updown"/></svg></span></span>
              <span class="ml-[299px]">0 records selected</span>
              <span class="ml-auto">View Options</span><svg width="4" height="6" class="ml-[5px]"><use href="#updown"/></svg>
              <span class="ml-[5px]">Actions</span><svg width="4" height="6" class="ml-[5px]"><use href="#updown"/></svg>
            </div>
            <table class="table-fixed border-collapse w-[786px] text-[7.300px] text-[#1f6cb0]">
              <colgroup><col class="w-[10px]"><col class="w-[81px]"><col class="w-[81px]"><col class="w-[81px]"><col class="w-[80px]"><col class="w-[81px]"><col class="w-[80px]"><col class="w-[81px]"><col class="w-[80px]"><col class="w-[80px]"><col class="w-[51px]"></colgroup>
              <thead class="text-[#222] text-[6.900px] font-bold bg-[#f7f7ef]">
                <tr class="h-[18px] border-y border-[#dfe3ea]">
                  <th class="bg-[#e5e6ec] p-0"><span class="block mx-auto w-[7px] h-[7px] border border-[#9a9fa7] bg-[#dfe1e5]"></span></th>
                  <th class="border-l border-[#e6ebf3]">Work Order</th><th class="border-l border-[#e6ebf3]">Work Order Descript...</th><th class="border-l border-[#e6ebf3]">Asset Number</th><th class="border-l-2 border-[#c8ccd3]">Status</th><th class="border-l border-[#e6ebf3]">Work Order Type</th><th class="border-l border-[#e6ebf3]">Priority</th><th class="border-l border-[#e6ebf3]">Project</th><th class="border-l border-[#e6ebf3]">Task</th><th class="border-l border-[#e6ebf3]">Planned</th><th class="border-l border-[#e6ebf3] text-right pr-[2px] whitespace-nowrap overflow-hidden">Shutdown</th>
                </tr>
              </thead>
              <tbody class="[&_td]:p-0 [&_td]:pl-[3px] [&_td]:leading-[10px] [&_td]:border-l [&_td]:border-[#e6ebf3] [&_tr]:border-b [&_tr]:border-[#e3e8f0] [&_tr]:h-[12.400px]">
                <tr class="bg-[#f7f8ff]"><td class="bg-[#e5e6ec] !pl-[1.500px]"><span class="block w-[7px] h-[7px] border border-[#b0b4bb] bg-[#e3e4e8]"></span></td><td>WO390907</td><td>[All Fork Lift Daily...</td><td>ST-T1</td><td class="!border-l-2 !border-[#c8ccd3]">Released</td><td></td><td>Medium</td><td></td><td></td><td>N</td><td>Required</td></tr>
                <tr class="bg-[#e8eff6]"><td class="bg-[#e5e6ec] !pl-[1.500px]"><span class="block w-[7px] h-[7px] border border-[#b0b4bb] bg-[#e3e4e8]"></span></td><td>WO389507</td><td></td><td>ST001</td><td class="!border-l-2 !border-[#c8ccd3]">Released</td><td></td><td></td><td></td><td></td><td>N</td><td></td></tr>
                <tr class="bg-[#f7f8ff]"><td class="bg-[#e5e6ec] !pl-[1.500px]"><span class="block w-[7px] h-[7px] border border-[#b0b4bb] bg-[#e3e4e8]"></span></td><td>WO387910</td><td></td><td>FL1010</td><td class="!border-l-2 !border-[#c8ccd3]">Released</td><td></td><td></td><td></td><td></td><td>N</td><td></td></tr>
                <tr class="bg-[#f7f7ef]"><td class="bg-[#e5e6ec] !pl-[1.500px]"><span class="block w-[7px] h-[7px] border border-[#b0b4bb] bg-[#e3e4e8]"></span></td><td>PM378915</td><td>Act_LL</td><td>LL01</td><td class="!border-l-2 !border-[#c8ccd3]">Unreleased</td><td></td><td></td><td></td><td></td><td>Y</td><td></td></tr>
                <tr class="bg-[#f7f8ff]"><td class="bg-[#e5e6ec] !pl-[1.500px]"><span class="block w-[7px] h-[7px] border border-[#b0b4bb] bg-[#e3e4e8]"></span></td><td>PM378914</td><td>Act_LL</td><td>LL01</td><td class="!border-l-2 !border-[#c8ccd3]">Unreleased</td><td></td><td></td><td></td><td></td><td>Y</td><td></td></tr>
                <tr class="bg-[#f7f7ef]"><td class="bg-[#e5e6ec] !pl-[1.500px]"><span class="block w-[7px] h-[7px] border border-[#b0b4bb] bg-[#e3e4e8]"></span></td><td>PM378913</td><td>Act_LL</td><td>LL01</td><td class="!border-l-2 !border-[#c8ccd3]">Unreleased</td><td></td><td></td><td></td><td></td><td>Y</td><td></td></tr>
                <tr class="bg-[#f7f8ff]"><td class="bg-[#e5e6ec] !pl-[1.500px]"><span class="block w-[7px] h-[7px] border border-[#b0b4bb] bg-[#e3e4e8]"></span></td><td>PM378910</td><td>Act_LL</td><td>LL01</td><td class="!border-l-2 !border-[#c8ccd3]">Unreleased</td><td></td><td></td><td></td><td></td><td>Y</td><td></td></tr>
                <tr class="bg-[#f7f7ef]"><td class="bg-[#e5e6ec] !pl-[1.500px]"><span class="block w-[7px] h-[7px] border border-[#b0b4bb] bg-[#e3e4e8]"></span></td><td>PM378911</td><td>Act_LL</td><td>LL01</td><td class="!border-l-2 !border-[#c8ccd3]">Unreleased</td><td></td><td></td><td></td><td></td><td>Y</td><td></td></tr>
                <tr class="bg-[#f7f8ff]"><td class="bg-[#e5e6ec] !pl-[1.500px]"><span class="block w-[7px] h-[7px] border border-[#b0b4bb] bg-[#e3e4e8]"></span></td><td>PM378912</td><td>Act_LL</td><td>LL01</td><td class="!border-l-2 !border-[#c8ccd3]">Unreleased</td><td></td><td></td><td></td><td></td><td>Y</td><td></td></tr>
                <tr class="bg-[#f7f7ef]"><td class="bg-[#e5e6ec] !pl-[1.500px]"><span class="block w-[7px] h-[7px] border border-[#b0b4bb] bg-[#e3e4e8]"></span></td><td>PM378909</td><td>Act_LL</td><td>LL01</td><td class="!border-l-2 !border-[#c8ccd3]">Unreleased</td><td></td><td></td><td></td><td></td><td>Y</td><td></td></tr>
              </tbody>
            </table>
            <div class="h-[9px] bg-[#e5e6ec] flex">
              <span class="w-[253px] border-r-2 border-[#c8ccd3] bg-[repeating-linear-gradient(90deg,#f7f8fb_0,#f7f8fb_1px,transparent_1px,transparent_13px)]"></span>
              <svg width="18" height="9" viewBox="0 0 18 10"><path d="M11 2L8 5l3 3" fill="none" stroke="#555" stroke-width="1.200"/></svg>
              <span class="w-[235px] bg-[#b5b5b5]"></span>
              <svg width="280" height="9" viewBox="0 0 280 10" class="ml-auto"><path d="M266 2l3 3-3 3" fill="none" stroke="#555" stroke-width="1.200"/></svg>
            </div>
            <div class="h-[15px] bg-[#e5e6ec] border-t border-[#d8dae1] flex items-center px-[3px] text-[#555] text-[5.500px]">
              <svg width="12" height="6"><use href="#pgl"/></svg><span class="ml-[3px] text-[7.500px]">Page</span>
              <span class="ml-[3px] w-[23px] h-[11px] bg-[#fbfcff] border border-[#e3e6ec] text-right pr-[1px] leading-[9px]">1</span>
              <span class="ml-[3px]">of 59</span><svg width="12" height="6" class="ml-[4px]"><use href="#pgr"/></svg>
              <span class="ml-auto mr-[15px]">1-10 of 586 &nbsp;|&nbsp; 10 per page</span>
            </div>
          </div>
        </div>
      </section>
    </div>
  </main>

  <div class="flex ml-[167px] mt-[45px]">
    <section class="w-[342px]">
      <h2 class="h-[14px] text-[8.300px] font-bold leading-[14px] text-[#222]">My Work Requests</h2>
      <div class="h-[22px] flex items-end justify-end pr-[7px]"><span class="w-[81px] h-[12px] bg-[#e5e9f1] rounded-[1px] text-[6.300px] font-bold text-center leading-[12px] whitespace-nowrap">View All Work Requests</span></div>
      <div class="h-[13px] border-y border-[#e3e6ec] flex items-center pl-[4px] -mb-px">
        <span class="w-[71px] h-[10px] bg-[#e5e9f1] rounded-[1px] text-[6px] font-bold text-center leading-[10px]">Create Work Request</span>
        <span class="ml-[2px] mr-[1px] w-px h-[8px] bg-[#bbb]"></span>
        <svg width="70" height="12"><use href="#tools"/></svg>
      </div>
      <table class="table-fixed border-collapse w-[342px] text-[6.500px] font-bold text-[#222]">
        <colgroup><col class="w-[81px]"><col class="w-[52px]"><col class="w-[65px]"><col class="w-[73px]"><col class="w-[26px]"><col class="w-[45px]"></colgroup>
        <tr class="h-[19px] bg-[#f7f7ef] leading-[9px] border-b border-[#dfe3ea]"><th class="text-left pl-[3px] font-bold border-l border-[#e8e8de]">Work Request<br>Number</th><th class="text-left pl-[3px] border-l border-[#e8e8de]">Asset<br>Number</th><th class="text-left pl-[3px] border-l border-[#e8e8de]">Asset Description</th><th class="text-left pl-[2px] border-l border-[#e8e8de]">Request<br>Description</th><th class="text-left pl-[2px] border-l border-[#e8e8de]">Status</th><th class="text-left pl-[2px] border-l border-[#e8e8de]">Department</th></tr>
        <tr class="h-[10px] font-normal text-[#444] border-b border-[#f0f0e8]"><td class="pl-[2px] leading-[9px] whitespace-nowrap">No results found.</td><td class="border-l border-[#ededf3]"></td><td class="border-l border-[#ededf3]"></td><td class="border-l border-[#ededf3]"></td><td class="border-l border-[#ededf3]"></td><td class="border-l border-[#ededf3]"></td></tr>
      </table>
    </section>
    <section class="w-[341px]">
      <h2 class="h-[14px] text-[8.300px] font-bold leading-[14px] text-[#222]">My Checked Out Assets</h2>
      <div class="mt-[8px] h-[14px] border-y border-[#e3e6ec] flex items-center pl-[3px] -mb-px">
        <span class="w-[58px] h-[11px] bg-[#e5e9f1] rounded-[1px] text-[6px] font-bold text-center leading-[11px]">Check Out Asset</span>
        <span class="ml-[2px] mr-[1px] w-px h-[8px] bg-[#bbb]"></span>
        <svg width="70" height="12"><use href="#tools"/></svg>
      </div>
      <table class="table-fixed border-collapse w-[341px] text-[6.500px] font-bold text-[#222]">
        <colgroup><col class="w-[104px]"><col class="w-[130px]"><col class="w-[38px]"><col class="w-[69px]"></colgroup>
        <tr class="h-[11px] bg-[#f7f7ef] border-b border-[#dfe3ea]"><th class="text-left pl-[2px]">Asset Number</th><th class="text-left pl-[2px] border-l border-[#e8e8de]">Asset Description</th><th class="text-left pl-[2px] border-l border-[#e8e8de]">Date</th><th class="border-l border-[#e8e8de]">Check In</th></tr>
        <tr class="h-[10px] font-normal text-[#444] border-b border-[#f0f0e8]"><td class="pl-[1px] leading-[9px]">No results found.</td><td class="border-l border-[#ededf3]"></td><td class="border-l border-[#ededf3]"></td><td class="border-l border-[#ededf3]"></td></tr>
      </table>
    </section>
  </div>

  <section class="ml-[11px] w-[397px] mt-[18px]">
    <h2 class="h-[12px] text-[8.300px] font-bold leading-[12px] text-[#222]">Notifications</h2>
    <div class="mt-[17px] h-[11px] flex items-center justify-between text-[6.450px] text-[#444] whitespace-nowrap">
      <span>Below is a list of your most important notifications. Select the subject to respond or select "Full List" to see all your notifications.</span>
      <span class="w-[33px] h-[11px] bg-[#e5e9f1] rounded-[1px] font-bold text-center leading-[11px] text-[#222]">Full List</span>
    </div>
    <div class="mt-px h-[14px] border border-b-0 border-[#e3e6ec] flex items-center pl-[1px]"><svg width="70" height="12"><use href="#tools"/></svg></div>
    <table class="table-fixed border-collapse w-[397px] text-[6.500px] text-[#222]">
      <colgroup><col class="w-[220px]"><col class="w-[42px]"><col class="w-[60px]"><col class="w-[40px]"><col class="w-[35px]"></colgroup>
      <tr class="h-[11px] bg-[#f7f7ef] border-y border-[#dfe3ea] font-bold"><th class="text-left pl-[3px]">From</th><th class="text-left pl-[2px] border-l border-[#e8e8de]">Type</th><th class="text-left pl-[3px] border-l border-[#e8e8de]">Subject</th><th class="text-left pl-[3px] border-l border-[#e8e8de]">Sent</th><th class="text-left pl-[3px] border-l border-[#e8e8de]">Due</th></tr>
      <tr class="h-[10px] text-[#444] bg-[#f9f9f2]"><td class="pl-[2px] leading-[9px]">There are no notifications in this view.</td><td class="border-l border-[#ededf3]"></td><td class="border-l border-[#ededf3]"></td><td class="border-l border-[#ededf3]"></td><td class="border-l border-[#ededf3]"></td></tr>
    </table>
    <div class="h-[15px] border border-[#e3e6ec] flex items-center justify-end pr-[4px] text-[6.300px] text-[#444]"><span>Total Notifications : 0</span><span class="ml-[13px] font-bold text-[#2a6496]">View All</span></div>
  </section>

  <div class="ml-[12px] mt-[9px] h-[10px] flex items-center text-[6.500px] text-[#444]">
    <svg width="8" height="8" viewBox="0 0 8 8"><rect x=".5" y="2" width="5.500" height="5.500" rx="1" fill="none" stroke="#2a79b8"/><path d="M2 4.500l1.500 1.500L7.500 1" fill="none" stroke="#2a79b8"/></svg>
    <span class="text-[#145c9e]">TIP</span>
    <span class="ml-[2px] text-[#145c9e] underline">Vacation Rules</span>
    <span class="ml-[2px]">- Redirect or auto-respond to notifications.</span>
  </div>
</div>

<footer class="h-[13px] flex items-center justify-between pl-[4px] pr-[5px] text-[6.800px] text-white">
  <span>Copyright (c) 1998, 2015, Oracle and/or its affiliates. All rights reserved.</span>
  <span>About this Page</span>
</footer>
<div class="h-[2px] bg-[#f7f8ff]"></div>
</body>
</html>
